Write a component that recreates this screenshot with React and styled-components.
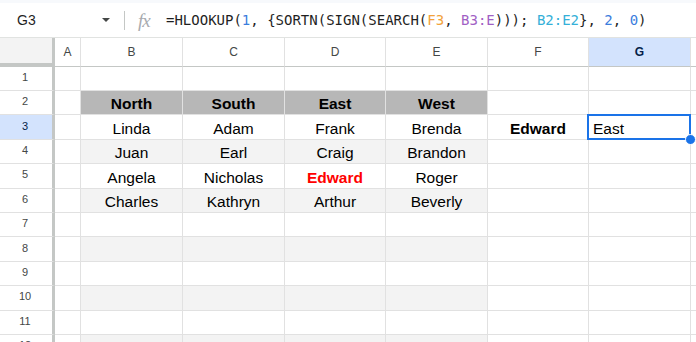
import React from 'react'
import styled, { createGlobalStyle } from 'styled-components'

const GlobalStyle = createGlobalStyle`
  html, body {
    margin: 0;
    padding: 0;
    background: #fff;
    font-family: "Liberation Sans", Arial, sans-serif;
    overflow: hidden;
  }
  * { box-sizing: border-box; }
`

const Page = styled.div`
  width: 696px;
  height: 342px;
  display: flex;
  flex-direction: column;
  overflow: hidden;
`

const FormulaBar = styled.div`
  height: 38px;
  flex: none;
  display: flex;
  align-items: center;
  border-top: 3px solid #f7f9fc;
  border-bottom: 1px solid #e1e3e1;
`

const NameBox = styled.div`
  width: 124px;
  display: flex;
  align-items: center;
  justify-content: space-between;
  padding: 0 14px 0 17px;
  font-size: 14px;
  color: #1f1f1f;
`

const Caret = styled.span`
  width: 0;
  height: 0;
  border-left: 4px solid transparent;
  border-right: 4px solid transparent;
  border-top: 4px solid #444746;
`

const Divider = styled.span`
  width: 1px;
  height: 19px;
  background: #c4c7c5;
`

const Fx = styled.span`
  margin-left: 13px;
  width: 17px;
  font-family: "Liberation Serif", serif;
  font-style: italic;
  font-size: 19px;
  color: #a8abaf;
  letter-spacing: -1px;
  line-height: 1;
`

const Formula = styled.div`
  margin-left: 11px;
  font-family: "DejaVu Sans Mono", monospace;
  font-size: 14px;
  color: #1f1f1f;
  white-space: pre;
`

const Token = styled.span`
  color: ${p => p.$color};
`

const Sheet = styled.div`
  flex: 1;
  display: grid;
  grid-template-columns: 55px 26px 102px 102px 101px 102px 101px 102px 1fr;
  grid-template-rows: 28.7px repeat(12, 24.4px);
  overflow: hidden;
`

const Corner = styled.div`
  background: #f3f3f3;
  border-right: 3px solid #c4c7c5;
  border-bottom: 4px solid #c4c7c5;
`

const ColHead = styled.div`
  display: flex;
  align-items: center;
  justify-content: center;
  font-size: 12px;
  color: ${p => (p.$active ? '#041e49' : '#444746')};
  font-weight: ${p => (p.$active ? 700 : 400)};
  background: ${p => (p.$active ? '#d3e3fd' : '#fff')};
  border-right: 1px solid #e1e1e1;
  border-bottom: 1px solid #c4c7c5;
`

const RowHead = styled.div`
  display: flex;
  align-items: center;
  justify-content: center;
  padding-bottom: 3px;
  padding-right: 2px;
  font-size: 11px;
  color: ${p => (p.$active ? '#041e49' : '#444746')};
  background: ${p => (p.$active ? '#d3e3fd' : '#fff')};
  border-right: 3px solid #c4c7c5;
  border-bottom: 1px solid #e1e1e1;
`

const Cell = styled.div`
  position: ${p => (p.$selected ? 'relative' : 'static')};
  display: flex;
  align-items: flex-end;
  justify-content: ${p => (p.$left ? 'flex-start' : 'center')};
  padding: 0 4px 1px;
  font-size: 15.5px;
  white-space: nowrap;
  color: ${p => p.$color || '#000'};
  font-weight: ${p => (p.$bold ? 700 : 400)};
  background: ${p => p.$fill || '#fff'};
  border-right: 1px solid #e1e1e1;
  border-bottom: 1px solid #e1e1e1;

  ${p => p.$selected && `
    &::after {
      content: '';
      position: absolute;
      top: -1px;
      left: -2px;
      right: -1px;
      bottom: -1px;
      border: 2px solid #1a73e8;
    }
    &::before {
      content: '';
      position: absolute;
      right: -6px;
      bottom: -6px;
      width: 9px;
      height: 9px;
      border-radius: 50%;
      background: #1a73e8;
      border: 1px solid #fff;
      z-index: 2;
    }
  `}
`

const columns = ['A', 'B', 'C', 'D', 'E', 'F', 'G', '']

const names = {
  2: ['North', 'South', 'East', 'West'],
  3: ['Linda', 'Adam', 'Frank', 'Brenda'],
  4: ['Juan', 'Earl', 'Craig', 'Brandon'],
  5: ['Angela', 'Nicholas', 'Edward', 'Roger'],
  6: ['Charles', 'Kathryn', 'Arthur', 'Beverly'],
}

const formula = [
  ['=HLOOKUP(', '#1f1f1f'],
  ['1', '#3b7ddd'],
  [', {SORTN(SIGN(SEARCH(', '#1f1f1f'],
  ['F3', '#f2a23a'],
  [', ', '#1f1f1f'],
  ['B3:E', '#a15fc4'],
  ['))); ', '#1f1f1f'],
  ['B2:E2', '#35b0d8'],
  ['}, ', '#1f1f1f'],
  ['2', '#3b7ddd'],
  [', ', '#1f1f1f'],
  ['0', '#3b7ddd'],
  [')', '#1f1f1f'],
]

function renderRow (r) {
  const cells = []
  cells.push(<RowHead key='h' $active={r === 3}>{r}</RowHead>)
  columns.forEach((col, i) => {
    const key = col || 'H'
    const inTable = i >= 1 && i <= 4
    let text = ''
    const props = {}
    if (inTable) {
      if (r % 2 === 0) props.$fill = r === 2 ? '#b7b7b7' : '#f3f3f3'
      if (names[r]) text = names[r][i - 1]
      if (r === 2) props.$bold = true
      if (r === 5 && col === 'D') {
        props.$bold = true
        props.$color = '#ff0000'
      }
    }
    if (r === 3 && col === 'F') {
      text = 'Edward'
      props.$bold = true
    }
    if (r === 3 && col === 'G') {
      text = 'East'
      props.$left = true
      props.$selected = true
    }
    cells.push(<Cell key={key} {...props}>{text}</Cell>)
  })
  return cells
}

export default function App () {
  const rows = Array.from({ length: 12 }, (_, i) => i + 1)
  return (
    <Page>
      <GlobalStyle />
      <FormulaBar>
        <NameBox>
          <span>G3</span>
          <Caret />
        </NameBox>
        <Divider />
        <Fx>fx</Fx>
        <Formula>
          {formula.map(([t, c], i) => <Token key={i} $color={c}>{t}</Token>)}
        </Formula>
      </FormulaBar>
      <Sheet>
        <Corner />
        {columns.map(c => (
          <ColHead key={c || 'H'} $active={c === 'G'}>{c}</ColHead>
        ))}
        {rows.map(r => renderRow(r))}
      </Sheet>
    </Page>
  )
}
